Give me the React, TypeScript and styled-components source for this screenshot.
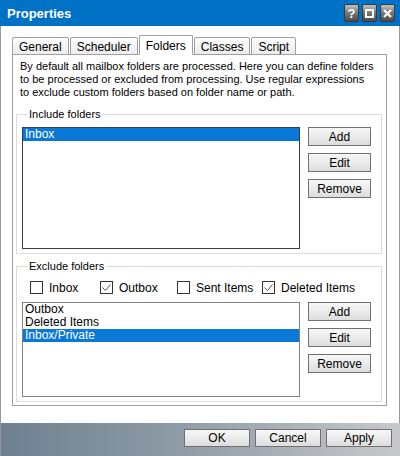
import styled, { createGlobalStyle } from 'styled-components'

const GlobalStyle = createGlobalStyle`
  body {
    margin: 0;
    font-family: 'Liberation Sans', Arial, sans-serif;
    font-size: 11px;
    color: #000;
  }
`

const Window = styled.div`
  width: 400px;
  height: 456px;
  display: flex;
  flex-direction: column;
  overflow: hidden;
`

const TitleBar = styled.div`
  height: 26px;
  flex: none;
  background: #0072c6;
  display: flex;
  align-items: center;
  justify-content: space-between;
  padding: 0 5px 0 7px;
`

const Title = styled.span`
  color: #fff;
  font-weight: bold;
  font-size: 13px;
`

const TitleButtons = styled.div`
  display: flex;
  gap: 3px;
`

const TitleButton = styled.div`
  width: 15px;
  height: 18px;
  box-sizing: border-box;
  border-radius: 2px;
  border: 1px solid #3a3a3a;
  background: linear-gradient(#c2c2c2, #7c7c7c 45%, #4a4a4a);
  display: flex;
  align-items: center;
  justify-content: center;
  color: #fff;
  font-weight: bold;
  font-size: 13px;
  line-height: 1;
`

const Body = styled.div`
  flex: 1;
  background: #fff;
  border-left: 1px solid #9a9a9a;
  border-right: 1px solid #9a9a9a;
  padding: 9px 0 0 11px;
`

const TabRow = styled.div`
  display: flex;
  align-items: flex-end;
  gap: 1px;
  height: 20px;
  position: relative;
  z-index: 1;
  margin-bottom: -1px;
`

const Tab = styled.div<{ $active?: boolean }>`
  box-sizing: border-box;
  height: ${(p) => (p.$active ? 20 : 18)}px;
  padding: ${(p) => (p.$active ? '2px 6px 0' : '1px 6px 0')};
  border: 1px solid #a0a0a0;
  border-bottom: ${(p) => (p.$active ? '1px solid #fff' : '1px solid #a0a0a0')};
  border-radius: 2px 2px 0 0;
  background: ${(p) => (p.$active ? '#fff' : 'linear-gradient(#fdfdfd, #ececec)')};
  display: flex;
  align-items: center;
  font-size: 12px;
`

const Panel = styled.div`
  width: 375px;
  height: 352px;
  box-sizing: border-box;
  border: 1px solid #a0a0a0;
  padding: 5px 4px 0 3px;
  display: flex;
  flex-direction: column;
`

const Intro = styled.p`
  margin: 0 0 9px 4px;
  line-height: 13px;
`

const Group = styled.fieldset<{ $gap?: number }>`
  margin: ${(p) => p.$gap ?? 0}px 0 0 0;
  padding: 0 9px 4px 5px;
  border: 1px solid #dcdcdc;
  min-inline-size: 0;
`

const Legend = styled.legend`
  padding: 0 2px;
  margin-left: 5px;
  line-height: 13px;
`

const GroupRow = styled.div<{ $top: number }>`
  display: flex;
  gap: 8px;
  margin-top: ${(p) => p.$top}px;
`

const ListBox = styled.div<{ $height: number; $focused?: boolean }>`
  width: 278px;
  height: ${(p) => p.$height}px;
  box-sizing: border-box;
  border: 1px solid ${(p) => (p.$focused ? '#3c3c3c' : '#828282')};
  background: #fff;
`

const ListItem = styled.div<{ $selected?: boolean }>`
  height: 13px;
  line-height: 13px;
  padding-left: 2px;
  background: ${(p) => (p.$selected ? '#0a78d7' : 'transparent')};
  color: ${(p) => (p.$selected ? '#fff' : '#000')};
  font-size: 12px;
`

const ButtonColumn = styled.div`
  display: flex;
  flex-direction: column;
  gap: 7px;
`

const Button = styled.button<{ $width: number; $height: number }>`
  width: ${(p) => p.$width}px;
  height: ${(p) => p.$height}px;
  box-sizing: border-box;
  padding: 0;
  border: 1px solid #707070;
  background: linear-gradient(#f7f7f7, #ebebeb 50%, #dcdcdc);
  font-family: inherit;
  font-size: 12px;
  color: #000;
`

const CheckRow = styled.div`
  display: flex;
  margin: 8px 0 0 8px;
  height: 13px;
  align-items: center;
`

const Check = styled.label<{ $width?: number }>`
  display: flex;
  align-items: center;
  gap: 6px;
  width: ${(p) => (p.$width ? `${p.$width}px` : 'auto')};
  font-size: 12px;
`

const Box = styled.span`
  width: 13px;
  height: 13px;
  box-sizing: border-box;
  border: 1px solid #333;
  background: #fff;
  display: flex;
  align-items: center;
  justify-content: center;
`

const Spacer = styled.div`
  flex: 1;
`

const BottomBar = styled.div`
  height: 33px;
  flex: none;
  background: linear-gradient(to right, #6e8191, #8b98a4 40%, #adb4bb 75%, #c6cacd);
  display: flex;
  justify-content: flex-end;
  align-items: flex-start;
  gap: 5px;
  padding: 6px 8px 0 0;
  box-sizing: border-box;
  border-left: 1px solid #9a9a9a;
`

const CheckBox = ({ label, checked, width }: { label: string; checked?: boolean; width?: number }) => (
  <Check $width={width}>
    <Box>
      {checked && (
        <svg width='9' height='8' viewBox='0 0 9 8'>
          <path d='M0.5 3.5 L3.5 6.5 L8.5 0.5' fill='none' stroke='#555' strokeWidth='1' />
        </svg>
      )}
    </Box>
    {label}
  </Check>
)

const SideButtons = () => (
  <ButtonColumn>
    <Button $width={63} $height={19}>Add</Button>
    <Button $width={63} $height={19}>Edit</Button>
    <Button $width={63} $height={19}>Remove</Button>
  </ButtonColumn>
)

const tabs = ['General', 'Scheduler', 'Folders', 'Classes', 'Script']

export default function App() {
  return (
    <Window>
      <GlobalStyle />
      <TitleBar>
        <Title>Properties</Title>
        <TitleButtons>
          <TitleButton>?</TitleButton>
          <TitleButton>
            <svg width='9' height='9' viewBox='0 0 9 9'>
              <rect x='1' y='1' width='7' height='7' fill='none' stroke='#fff' strokeWidth='2' />
            </svg>
          </TitleButton>
          <TitleButton>
            <svg width='9' height='9' viewBox='0 0 9 9'>
              <path d='M1 1 L8 8 M8 1 L1 8' stroke='#fff' strokeWidth='2.2' />
            </svg>
          </TitleButton>
        </TitleButtons>
      </TitleBar>

      <Body>
        <TabRow>
          {tabs.map((t) => (
            <Tab key={t} $active={t === 'Folders'}>
              {t}
            </Tab>
          ))}
        </TabRow>
        <Panel>
          <Intro>
            By default all mailbox folders are processed. Here you can define folders
            <br />
            to be processed or excluded from processing. Use regular expressions
            <br />
            to exclude custom folders based on folder name or path.
          </Intro>

          <Group>
            <Legend>Include folders</Legend>
            <GroupRow $top={6}>
              <ListBox $height={122} $focused>
                <ListItem $selected>Inbox</ListItem>
              </ListBox>
              <SideButtons />
            </GroupRow>
          </Group>

          <Group $gap={6}>
            <Legend>Exclude folders</Legend>
            <CheckRow>
              <CheckBox label='Inbox' width={70} />
              <CheckBox label='Outbox' checked width={77} />
              <CheckBox label='Sent Items' width={85} />
              <CheckBox label='Deleted Items' checked />
            </CheckRow>
            <GroupRow $top={8}>
              <ListBox $height={95}>
                <ListItem>Outbox</ListItem>
                <ListItem>Deleted Items</ListItem>
                <ListItem $selected>Inbox/Private</ListItem>
              </ListBox>
              <SideButtons />
            </GroupRow>
          </Group>
          <Spacer />
        </Panel>
      </Body>

      <BottomBar>
        <Button $width={66} $height={18}>OK</Button>
        <Button $width={66} $height={18}>Cancel</Button>
        <Button $width={66} $height={18}>Apply</Button>
      </BottomBar>
    </Window>
  )
}
